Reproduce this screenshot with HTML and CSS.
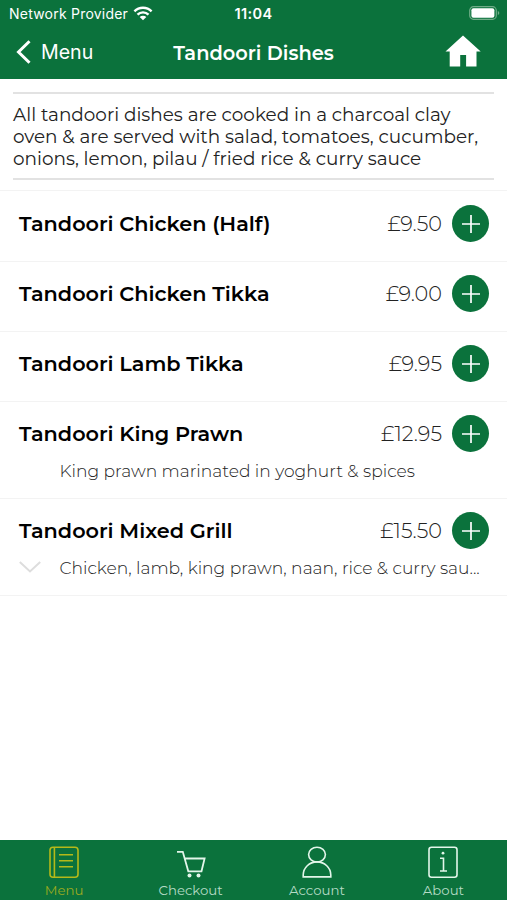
FILE: index.html
```html
<!DOCTYPE html>
<html lang="en">

<head>
    <meta charset="UTF-8">
    <meta name="viewport" content="width=device-width, initial-scale=1.0">
    <title>Tandoori Dishes</title>
    <link rel="stylesheet" href="styles.css">
</head>

<body>
    <div class="app">
        <header>
            <div class="status-bar">
                <div class="carrier">
                    <span>Network Provider</span>
                    <svg width="20" height="15" viewBox="0 0 20 15">
                        <path d="M1.4 5.3a12.2 12.2 0 0 1 17.2 0M4.5 8.6a7.8 7.8 0 0 1 11 0" fill="none" stroke="#fff" stroke-width="2.4"/>
                        <path d="M10 14.2l-3.3-3.2a4.7 4.7 0 0 1 6.6 0z" fill="#fff"/>
                    </svg>
                </div>
                <span class="time">11:04</span>
                <svg class="battery" width="31" height="14" viewBox="0 0 31 14">
                    <rect x="0.7" y="0.7" width="26.6" height="12.6" rx="3.8" fill="none" stroke="#6fac87" stroke-width="1.2"/>
                    <rect x="2.4" y="2.3" width="23" height="9.4" rx="2" fill="#fff"/>
                    <path d="M28.8 5v4q1.5-.6 1.5-2t-1.5-2z" fill="#6fac87"/>
                </svg>
            </div>
            <div class="nav-bar">
                <a class="back">
                    <svg width="15" height="24" viewBox="0 0 15 24"><path d="M13.5 1.2L2.5 12l11 10.8" fill="none" stroke="#fff" stroke-width="3"/></svg>
                    <span>Menu</span>
                </a>
                <h1>Tandoori Dishes</h1>
                <a class="home">
                    <svg width="36" height="32" viewBox="0 0 36 32"><path d="M18 .5L.5 16.6h4.2v14.8h10.5V20h5.9v11.4h10.4V16.6h4.2z" fill="#fff"/></svg>
                </a>
            </div>
        </header>

        <main>
            <div class="intro">
                <p>All tandoori dishes are cooked in a charcoal clay<br>
                oven &amp; are served with salad, tomatoes, cucumber,<br>
                onions, lemon, pilau / fried rice &amp; curry sauce</p>
            </div>

            <ul class="dishes">
                <li>
                    <div class="dish">
                        <h2>Tandoori Chicken (Half)</h2>
                        <span class="price">£9.50</span>
                        <button class="add"><svg width="18" height="18" viewBox="0 0 18 18"><path d="M9 0v18M0 9h18"/></svg></button>
                    </div>
                </li>
                <li>
                    <div class="dish">
                        <h2>Tandoori Chicken Tikka</h2>
                        <span class="price">£9.00</span>
                        <button class="add"><svg width="18" height="18" viewBox="0 0 18 18"><path d="M9 0v18M0 9h18"/></svg></button>
                    </div>
                </li>
                <li>
                    <div class="dish">
                        <h2>Tandoori Lamb Tikka</h2>
                        <span class="price">£9.95</span>
                        <button class="add"><svg width="18" height="18" viewBox="0 0 18 18"><path d="M9 0v18M0 9h18"/></svg></button>
                    </div>
                </li>
                <li class="detailed">
                    <div class="dish">
                        <h2>Tandoori King Prawn</h2>
                        <span class="price">£12.95</span>
                        <button class="add"><svg width="18" height="18" viewBox="0 0 18 18"><path d="M9 0v18M0 9h18"/></svg></button>
                    </div>
                    <div class="description">
                        <span class="expand"></span>
                        <p>King prawn marinated in yoghurt &amp; spices</p>
                    </div>
                </li>
                <li class="detailed">
                    <div class="dish">
                        <h2>Tandoori Mixed Grill</h2>
                        <span class="price">£15.50</span>
                        <button class="add"><svg width="18" height="18" viewBox="0 0 18 18"><path d="M9 0v18M0 9h18"/></svg></button>
                    </div>
                    <div class="description">
                        <span class="expand"><svg width="22" height="12" viewBox="0 0 22 12"><path d="M.8 1L11 10.4 21.2 1" fill="none" stroke="#ddd" stroke-width="2"/></svg></span>
                        <p>Chicken, lamb, king prawn, naan, rice &amp; curry sau...</p>
                    </div>
                </li>
            </ul>
        </main>

        <nav class="tabs">
            <a class="tab active">
                <svg width="32" height="34" viewBox="0 0 32 34">
                    <rect x="2" y="2.2" width="28" height="30" rx="3"/>
                    <path d="M6.4 2.4v30M11 9.8h14M11 15.8h14M11 21.8h14"/>
                </svg>
                <span>Menu</span>
            </a>
            <a class="tab">
                <svg width="32" height="34" viewBox="0 0 32 34">
                    <path d="M2 6.8h5.8l5.5 19.5h13.2L29.6 13.5H9.8" stroke-width="1.8"/>
                    <circle class="wheel" cx="14.5" cy="30.5" r="2"/>
                    <circle class="wheel" cx="23.5" cy="30.5" r="2"/>
                </svg>
                <span>Checkout</span>
            </a>
            <a class="tab">
                <svg width="32" height="34" viewBox="0 0 32 34">
                    <ellipse cx="16" cy="9.6" rx="8.4" ry="7.4"/>
                    <path d="M2.2 31.9v-2a13.8 13 0 0 1 27.6 0v2z"/>
                </svg>
                <span>Account</span>
            </a>
            <a class="tab">
                <svg width="32" height="34" viewBox="0 0 32 34">
                    <rect x="2" y="2.2" width="28" height="30" rx="2.5"/>
                    <path d="M13 13.2h3.5v13M13 26h7"/>
                    <circle class="wheel" cx="16" cy="8.2" r="1.4"/>
                </svg>
                <span>About</span>
            </a>
        </nav>
    </div>
</body>

</html>
```
FILE: styles.css
```css
* {
    margin: 0;
    padding: 0;
    box-sizing: border-box;
}

body {
    font-family: Montserrat, Inter, sans-serif;
    background-color: #fff;
    color: #222;
}

.app {
    display: flex;
    flex-direction: column;
    height: 100vh;
    overflow: hidden;
}

header {
    height: 79px;
    background-color: #0b723c;
    color: #fff;
}

/* Status bar */
.status-bar {
    display: grid;
    grid-template-columns: 1fr auto 1fr;
    align-items: center;
    height: 26px;
    padding: 0 7px;
    font-family: Inter, sans-serif;
    font-size: 14px;
}

.carrier {
    display: flex;
    align-items: center;
    gap: 5px;
    padding-left: 2px;
    letter-spacing: 0.22px;
}

.time {
    font-size: 14.5px;
    font-weight: 600;
    letter-spacing: 0.4px;
}

.battery {
    justify-self: end;
}

/* Navigation bar */
.nav-bar {
    display: grid;
    grid-template-columns: 1fr auto 1fr;
    align-items: center;
    height: 52px;
    padding: 0 16px;
}

.back {
    display: flex;
    align-items: center;
    gap: 10px;
    font-family: Inter, sans-serif;
    font-size: 19.6px;
}

.nav-bar h1 {
    padding-top: 2px;
    font-size: 19.4px;
    font-weight: 600;
}

.home {
    justify-self: end;
    height: 34px;
    margin-right: 10px;
}

main {
    flex: 1;
}

.intro {
    height: 88px;
    margin: 13px 13px 10px;
    padding-top: 10px;
    border-top: 2px solid #e2e2e2;
    border-bottom: 2px solid #e2e2e2;
    font-size: 18.42px;
    line-height: 22px;
    white-space: nowrap;
}

/* Dish list */
.dishes {
    list-style: none;
    border-top: 1px solid #f3f3f3;
}

.dishes li {
    height: 70px;
    border-bottom: 1px solid #f3f3f3;
}

.dishes li:first-child {
    height: 71px;
}

.dishes li.detailed {
    height: 97px;
}

.dish {
    display: flex;
    align-items: center;
    height: 63px;
    padding: 0 18px 0 19px;
}

.dishes li:first-child .dish {
    height: 65px;
}

.dish h2 {
    flex: 1;
    font-size: 20.8px;
    font-weight: 600;
    color: #000;
}

.price {
    margin-right: 10px;
    font-size: 20.8px;
    font-weight: 300;
}

.add {
    display: flex;
    align-items: center;
    justify-content: center;
    width: 37px;
    height: 37px;
    border: none;
    border-radius: 50%;
    background-color: #0b723c;
}

.add svg {
    stroke: #fff;
    stroke-width: 1.7;
}

.description {
    display: flex;
    align-items: center;
    height: 22px;
    margin-top: -6px;
    padding-left: 19px;
    font-size: 17.1px;
    font-weight: 300;
    white-space: nowrap;
    color: #222;
}

.expand {
    display: flex;
    width: 40.5px;
}

/* Bottom tabs */
.tabs {
    display: grid;
    grid-template-columns: repeat(4, 126.4px);
    height: 60px;
    padding-left: 1px;
    background-color: #0b723c;
}

.tab {
    display: flex;
    flex-direction: column;
    align-items: center;
    padding-top: 5px;
    color: #b5dbc5;
    font-size: 13.3px;
    line-height: 16px;
}

.tab svg {
    flex: none;
    margin-bottom: 3px;
    fill: none;
    stroke: #e3f6ea;
    stroke-width: 1.6;
}

.tab .wheel {
    fill: #e3f6ea;
    stroke: none;
}

.tab.active {
    color: #9aaa20;
}

.tab.active svg {
    stroke: #b5b919;
}
```
